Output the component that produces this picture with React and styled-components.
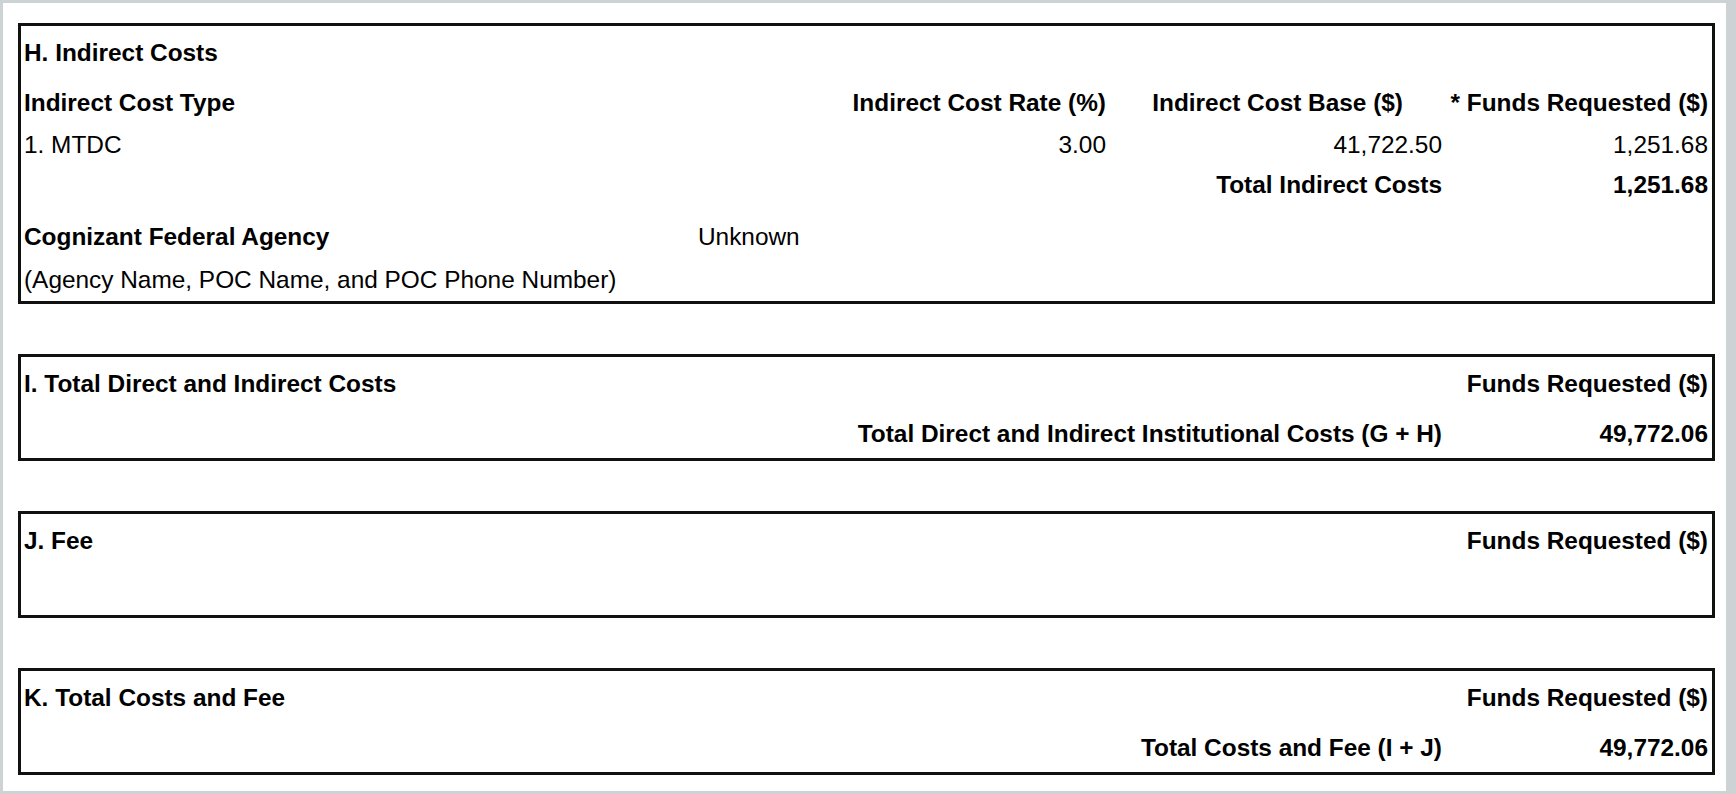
import React from 'react'
import styled, { createGlobalStyle } from 'styled-components'

const GlobalStyle = createGlobalStyle`
    html, body {
        margin: 0;
        padding: 0;
        background: #cdd3d5;
    }
    body {
        font-family: "Liberation Sans", Arial, sans-serif;
        color: #000;
    }
`

const Page = styled.div`
    margin: 3px 10px 5px 3px;
    background: #fff;
    padding: 20px 11px 16px 15px;
    display: flex;
    flex-direction: column;
    gap: 50px;
    min-height: 750px;
`

const Box = styled.section`
    border: 3px solid #111;
    padding: 13px 4px ${props => props.$pb || 10}px 3px;
    font-size: 24.4px;
    line-height: 28px;
`

const Row = styled.div`
    display: grid;
    grid-template-columns: ${props => props.$cols || '1fr 270px 336px 266px'};
    margin-top: ${props => props.$mt || 0}px;
    min-height: 28px;
`

const Cell = styled.div`
    grid-column: ${props => props.$span || 'auto'};
    text-align: ${props => props.$align || 'left'};
    font-weight: ${props => (props.$bold ? 700 : 400)};
    padding-right: ${props => props.$pr || 0}px;
    white-space: nowrap;
`

const App = () => {
    return (
        <React.Fragment>
            <GlobalStyle />
            <Page>
                <Box $pb={7}>
                    <Row>
                        <Cell $bold>H. Indirect Costs</Cell>
                    </Row>
                    <Row $mt={22}>
                        <Cell $bold>Indirect Cost Type</Cell>
                        <Cell $bold $align="right">Indirect Cost Rate (%)</Cell>
                        <Cell $bold $align="right" $pr={39}>Indirect Cost Base ($)</Cell>
                        <Cell $bold $align="right">* Funds Requested ($)</Cell>
                    </Row>
                    <Row $mt={14}>
                        <Cell>1. MTDC</Cell>
                        <Cell $align="right">3.00</Cell>
                        <Cell $align="right">41,722.50</Cell>
                        <Cell $align="right">1,251.68</Cell>
                    </Row>
                    <Row $mt={12}>
                        <Cell $span="1 / 4" $bold $align="right">Total Indirect Costs</Cell>
                        <Cell $bold $align="right">1,251.68</Cell>
                    </Row>
                    <Row $mt={24} $cols="674px 1fr">
                        <Cell $bold>Cognizant Federal Agency</Cell>
                        <Cell>Unknown</Cell>
                    </Row>
                    <Row $mt={15}>
                        <Cell $span="1 / 5">(Agency Name, POC Name, and POC Phone Number)</Cell>
                    </Row>
                </Box>

                <Box>
                    <Row>
                        <Cell $span="1 / 4" $bold>I. Total Direct and Indirect Costs</Cell>
                        <Cell $bold $align="right">Funds Requested ($)</Cell>
                    </Row>
                    <Row $mt={22}>
                        <Cell $span="1 / 4" $bold $align="right">Total Direct and Indirect Institutional Costs (G + H)</Cell>
                        <Cell $bold $align="right">49,772.06</Cell>
                    </Row>
                </Box>

                <Box>
                    <Row>
                        <Cell $span="1 / 4" $bold>J. Fee</Cell>
                        <Cell $bold $align="right">Funds Requested ($)</Cell>
                    </Row>
                    <Row $mt={22} />
                </Box>

                <Box>
                    <Row>
                        <Cell $span="1 / 4" $bold>K. Total Costs and Fee</Cell>
                        <Cell $bold $align="right">Funds Requested ($)</Cell>
                    </Row>
                    <Row $mt={22}>
                        <Cell $span="1 / 4" $bold $align="right">Total Costs and Fee (I + J)</Cell>
                        <Cell $bold $align="right">49,772.06</Cell>
                    </Row>
                </Box>
            </Page>
        </React.Fragment>
    )
}

export default App
